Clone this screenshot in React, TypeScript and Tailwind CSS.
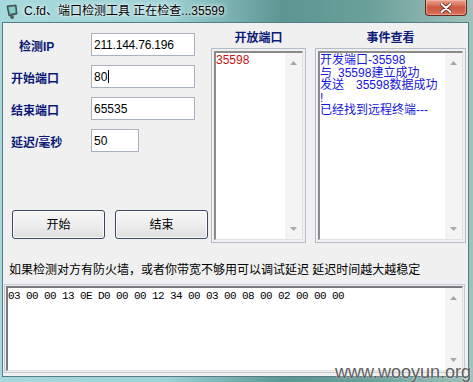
import React from "react";

const SANS = "font-['Liberation_Sans','Noto_Sans_CJK_SC',sans-serif]";
const LABEL = "text-[12px] font-bold text-[#0c1a78] whitespace-nowrap " + SANS;

function ScrollLane() {
  return (
    <div className="w-[17px] h-full bg-[#f4f4f4] flex flex-col justify-between items-center py-[8px] shrink-0">
      <svg width="7" height="4" viewBox="0 0 7 4">
        <path d="M3.5 0 L7 4 L0 4 Z" fill="#a8a8a8" />
      </svg>
      <svg width="7" height="4" viewBox="0 0 7 4">
        <path d="M0 0 L7 0 L3.5 4 Z" fill="#a8a8a8" />
      </svg>
    </div>
  );
}

function ListBox({ children, className }: { children: React.ReactNode; className: string }) {
  return (
    <div className={"border border-[#b3bcc8] p-[2px] bg-[#f0f0f0] " + className}>
      <div className="h-full flex bg-white border-t-2 border-l-2 border-t-[#8a8a8a] border-l-[#8a8a8a] border-r border-b border-r-[#e2e2e2] border-b-[#e2e2e2]">
        <div className="flex-1 min-w-0 overflow-hidden">{children}</div>
        <ScrollLane />
      </div>
    </div>
  );
}

function Field({ label, value, w, indent, caret }: { label: string; value: string; w: string; indent?: boolean; caret?: boolean }) {
  return (
    <div className="flex items-center h-[23px]">
      <div className={"w-[80px] " + (indent ? "pl-[8px]" : "")}>
        <span className={LABEL}>{label}</span>
      </div>
      <div className={"h-[23px] bg-white border border-[#a9b1bc] flex items-center pl-[2px] text-[12px] text-black " + SANS + " " + w}>
        {value}
        {caret && <span className="inline-block w-px h-[13px] bg-black ml-px" />}
      </div>
    </div>
  );
}

function Btn({ label }: { label: string }) {
  return (
    <button className={"w-[94px] h-[29px] rounded-[3px] border border-[#3a4862] bg-gradient-to-b from-[#f7f7f7] via-[#eeeeee] to-[#dedede] text-[12px] text-black shadow-[inset_0_0_0_1px_#fcfcfc] " + SANS}>
      {label}
    </button>
  );
}

export default function App() {
  return (
    <div className="w-[473px] h-[382px] relative overflow-hidden bg-[linear-gradient(90deg,#a6d9de_0%,#9dd2d6_35%,#5b9692_60%,#6aa09a_78%,#9fc2ba_100%)]">
      {/* title bar */}
      <div className="h-[22px] flex items-center pl-[5px]">
        <svg width="15" height="16" viewBox="0 0 15 16" className="mr-[4px] mt-[1px]">
          <path d="M2 2 L11 1 L12 10 L4 12 Z" fill="#5b6b6e" stroke="#2e3a3c" strokeWidth="0.8" />
          <path d="M3.5 3.2 L10 2.5 L10.6 8.6 L5 9.8 Z" fill="#7fd0c8" />
          <path d="M5 12 L6 15 L9 14.5 L8.5 11.5 Z" fill="#4d5a5c" />
        </svg>
        <span className={"text-[12px] text-black whitespace-nowrap [text-shadow:0_0_6px_#ffffff,0_0_3px_#ffffff] " + SANS}>
          C.fd、端口检测工具 正在检查...35599
        </span>
      </div>

      {/* close button */}
      <div className="absolute left-[425px] top-0 w-[42px] h-[16px] rounded-b-[4px] border border-t-0 border-[#5e2a22] bg-gradient-to-b from-[#e9a492] via-[#cf5840] to-[#d9705a] flex items-center justify-center shadow-[inset_0_0_0_1px_rgba(255,200,190,0.5)]">
        <svg width="12" height="10" viewBox="0 0 12 10">
          <path d="M1.5 1 L10.5 9 M10.5 1 L1.5 9" stroke="#5a2a22" strokeWidth="3.6" strokeLinecap="round" />
          <path d="M1.5 1 L10.5 9 M10.5 1 L1.5 9" stroke="#ffffff" strokeWidth="2" strokeLinecap="round" />
        </svg>
      </div>

      {/* client area */}
      <div className="ml-[2px] w-[467px] h-[355px] border border-[#567c88] bg-[#f0f0f0] flex flex-col">
        <div className="flex items-start h-[220px]">
          {/* left column */}
          <div className="w-[205px] flex flex-col pl-[8px] pt-[10px]">
            <div className="flex flex-col gap-[9px]">
              <Field label="检测IP" value="211.144.76.196" w="w-[104px] tracking-[-0.2px]" indent />
              <Field label="开始端口" value="80" w="w-[104px]" caret />
              <Field label="结束端口" value="65535" w="w-[104px]" />
              <Field label="延迟/毫秒" value="50" w="w-[48px]" />
            </div>
            <div className="flex gap-[10px] mt-[58px] ml-[1px]">
              <Btn label="开始" />
              <Btn label="结束" />
            </div>
          </div>

          {/* open ports */}
          <div className="ml-[3px] w-[95px] flex flex-col">
            <div className="h-[25px] flex items-center justify-center pt-[4px]">
              <span className={LABEL}>开放端口</span>
            </div>
            <ListBox className="h-[195px]">
              <div className={"text-[12px] leading-[13px] text-[#c81414] pt-[1px] " + SANS}>35598</div>
            </ListBox>
          </div>

          {/* events */}
          <div className="ml-[9px] w-[151px] flex flex-col">
            <div className="h-[25px] flex items-center justify-center pt-[4px]">
              <span className={LABEL}>事件查看</span>
            </div>
            <ListBox className="h-[195px]">
              <div className={"text-[12px] leading-[12.5px] text-[#1616dc] whitespace-nowrap pt-[1px] " + SANS}>
                <div>开发端口-35598</div>
                <div>与<span className="ml-[6px]">35598建立成功</span></div>
                <div>发送<span className="ml-[12px]">35598数据成功</span></div>
                <div>!</div>
                <div>已经找到远程终端---</div>
              </div>
            </ListBox>
          </div>
        </div>

        <div className={"mt-[19px] h-[16px] pl-[6px] text-[12px] leading-[16px] text-black whitespace-nowrap " + SANS}>
          如果检测对方有防火墙，或者你带宽不够用可以调试延迟 延迟时间越大越稳定
        </div>

        <div className="mt-[6px] ml-[1px] w-[461px] h-[89px] border border-[#c3cad3] p-px">
          <div className="h-full flex bg-white border-t-2 border-l-2 border-t-[#7a7a7a] border-l-[#7a7a7a] border-r border-b border-r-[#e2e2e2] border-b-[#e2e2e2]">
            <div className="flex-1 text-[11px] leading-[14px] tracking-[-0.6px] text-black pt-[1px] font-['Liberation_Mono',monospace] whitespace-nowrap">
              03 00 00 13 0E D0 00 00 12 34 00 03 00 08 00 02 00 00 00
            </div>
            <ScrollLane />
          </div>
        </div>
      </div>

      {/* watermark */}
      <div className="absolute left-[335px] top-[362px] text-[18px] leading-[20px] text-[#5e5e5e] font-['Liberation_Sans',sans-serif] [text-shadow:0_0_2px_#ffffff]">
        www.wooyun.org
      </div>
    </div>
  );
}
